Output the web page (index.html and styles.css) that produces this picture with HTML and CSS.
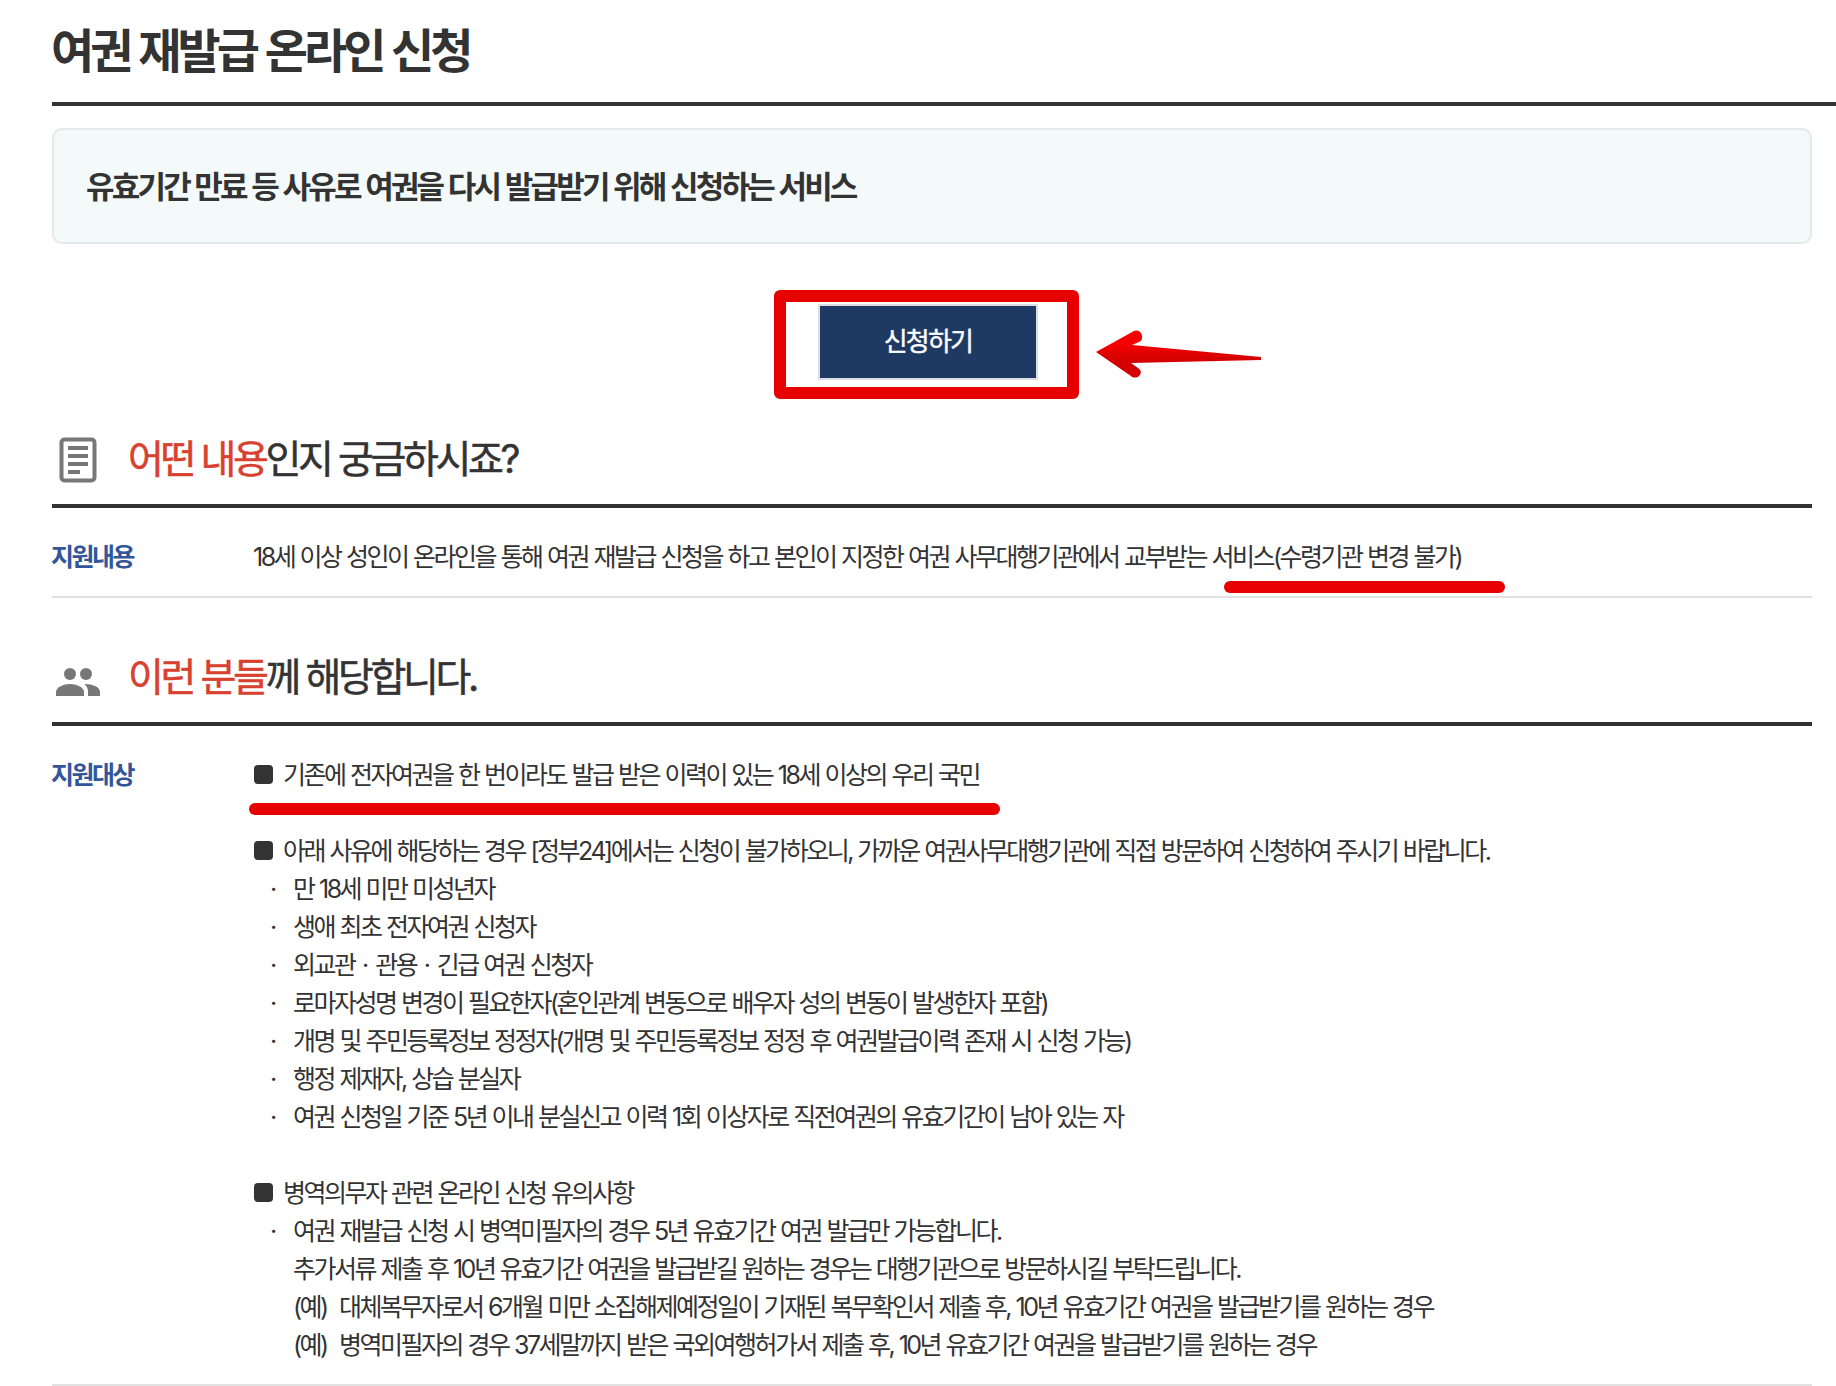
FILE: index.html
```html
<!DOCTYPE html>
<html lang="ko">
<head>
  <meta charset="UTF-8">
  <meta name="viewport" content="width=device-width, initial-scale=1.0">
  <title>여권 재발급 온라인 신청</title>
  <link rel="stylesheet" href="styles.css">
</head>
<body>
  <h1>여권 재발급 온라인 신청</h1>

  <div class="content">
    <div class="summary"><p>유효기간 만료 등 사유로 여권을 다시 발급받기 위해 신청하는 서비스</p></div>

    <div class="apply">
      <div class="apply-wrap">
        <button type="button" class="apply-btn">신청하기</button>
        <span class="mark-box"></span>
        <svg class="mark-arrow" width="170" height="50" viewBox="0 0 170 50">
          <defs>
            <linearGradient id="arrow" x1="0" y1="0" x2="0" y2="1">
              <stop offset="0.3" stop-color="#f50000"/>
              <stop offset="0.6" stop-color="#d40000"/>
            </linearGradient>
          </defs>
          <path d="M2 23 L40 2 C44 0 49 4 48 9 C48 11 47 12 45 13 L38 16 L167 28 L167 31 L37 34 L44 39 C47 41 48 44 45 47 C43 49 39 49 37 47 Z" fill="url(#arrow)"/>
        </svg>
      </div>
    </div>

    <div class="section">
      <h2>
        <svg class="icon" width="52" height="52" viewBox="0 0 52 52">
          <rect x="9.500" y="6.500" width="33" height="41" rx="3" fill="none" stroke="#777" stroke-width="4"/>
          <path d="M16 15h20M16 23h20M16 31h20M16 39h12" stroke="#777" stroke-width="4"/>
        </svg>
        <span><em>어떤 내용</em>인지 궁금하시죠?</span>
      </h2>
      <dl>
        <dt>지원내용</dt>
        <dd>
          <p>18세 이상 성인이 온라인을 통해 여권 재발급 신청을 하고 본인이 지정한 여권 사무대행기관에서 교부받는 서비스(수령기관 변경 불가)</p>
          <span class="mark-line mark-office"></span>
        </dd>
      </dl>
    </div>

    <div class="section">
      <h2>
        <svg class="icon" width="52" height="52" viewBox="0 0 52 52">
          <g fill="#777">
            <circle cx="18" cy="23" r="6"/>
            <circle cx="34" cy="23" r="6"/>
            <path d="M4 45v-4c0-5 8-8 14-8s14 3 14 8v4z"/>
            <path d="M36 45v-4c0-3-1-5.500-3.500-7.900C39 32.800 48 35.500 48 41v4z"/>
          </g>
        </svg>
        <span><em>이런 분들</em>께 해당합니다.</span>
      </h2>
      <dl>
        <dt>지원대상</dt>
        <dd>
          <p class="square">기존에 전자여권을 한 번이라도 발급 받은 이력이 있는 18세 이상의 우리 국민</p>
          <span class="mark-line mark-target"></span>
          <p class="square gap">아래 사유에 해당하는 경우 [정부24]에서는 신청이 불가하오니, 가까운 여권사무대행기관에 직접 방문하여 신청하여 주시기 바랍니다.</p>
          <p class="dot">만 18세 미만 미성년자</p>
          <p class="dot">생애 최초 전자여권 신청자</p>
          <p class="dot">외교관 <span class="mid">·</span> 관용 <span class="mid">·</span> 긴급 여권 신청자</p>
          <p class="dot">로마자성명 변경이 필요한자(혼인관계 변동으로 배우자 성의 변동이 발생한자 포함)</p>
          <p class="dot">개명 및 주민등록정보 정정자(개명 및 주민등록정보 정정 후 여권발급이력 존재 시 신청 가능)</p>
          <p class="dot">행정 제재자, 상습 분실자</p>
          <p class="dot">여권 신청일 기준 5년 이내 분실신고 이력 1회 이상자로 직전여권의 유효기간이 남아 있는 자</p>
          <p class="square gap">병역의무자 관련 온라인 신청 유의사항</p>
          <p class="dot">여권 재발급 신청 시 병역미필자의 경우 5년 유효기간 여권 발급만 가능합니다.</p>
          <p class="indent">추가서류 제출 후 10년 유효기간 여권을 발급받길 원하는 경우는 대행기관으로 방문하시길 부탁드립니다.</p>
          <p class="indent example"><span>(예)</span>대체복무자로서 6개월 미만 소집해제예정일이 기재된 복무확인서 제출 후, 10년 유효기간 여권을 발급받기를 원하는 경우</p>
          <p class="indent example"><span>(예)</span>병역미필자의 경우 37세말까지 받은 국외여행허가서 제출 후, 10년 유효기간 여권을 발급받기를 원하는 경우</p>
        </dd>
      </dl>
    </div>
  </div>
</body>
</html>
```
FILE: styles.css
```css
*, *::before {
  box-sizing: border-box;
}
body {
  margin: 0;
  padding-left: 52px;
  background-color: #fff;
  color: #333;
  font-family: Inter, "Noto Sans CJK KR", sans-serif;
  font-size: 25px;
  line-height: 38px;
  letter-spacing: -2.5px;
  word-spacing: 0.95px;
  white-space: nowrap;
  overflow: hidden;
}
h1, h2, p, dl, dd {
  margin: 0;
}
h1 {
  height: 106px;
  border-bottom: 4px solid #333;
  font-size: 47px;
  line-height: 101px;
  letter-spacing: -4px;
  word-spacing: 1.6px;
  text-indent: -1px;
}
.content {
  width: 1760px;
}
.summary {
  height: 116px;
  margin-top: 22px;
  padding: 0 32px;
  border: 2px solid #e6e9ec;
  border-radius: 10px;
  background-color: #f4f9fa;
  font-size: 31px;
  font-weight: bold;
  line-height: 113px;
  letter-spacing: -2.8px;
}
.apply {
  display: flex;
  justify-content: center;
  margin: 60px 8px 34px 0;
}
.apply-wrap {
  position: relative;
}
.apply-btn {
  display: block;
  width: 220px;
  height: 76px;
  padding: 0;
  border: 2px solid #dcdde2;
  background-color: #1f3a62;
  color: #fff;
  font: inherit;
  font-size: 26px;
  letter-spacing: -1.8px;
  -webkit-text-stroke: 0.4px;
}
.mark-box {
  position: absolute;
  left: -44px;
  top: -14px;
  width: 305px;
  height: 109px;
  border: 12px solid #e60000;
  border-radius: 6px;
}
.mark-arrow {
  position: absolute;
  left: 276px;
  top: 25px;
}
.section {
  margin-bottom: 34px;
}
h2 {
  display: flex;
  align-items: center;
  gap: 24px;
  height: 94px;
  border-bottom: 4px solid #333;
  font-size: 39px;
  font-weight: 400;
  letter-spacing: -3.4px;
  word-spacing: 0;
  -webkit-text-stroke: 0.5px;
}
h2 em {
  color: #d8402f;
  font-style: normal;
}
.icon {
  flex: none;
}
dl {
  display: flex;
  padding: 30px 0 20px;
  border-bottom: 2px solid #e1e1e1;
}
dt {
  width: 201px;
  color: #33569b;
  font-weight: bold;
  text-indent: -1px;
}
dd {
  position: relative;
}
.square::before {
  content: "";
  display: inline-block;
  width: 19px;
  height: 19px;
  margin: 0 10px 0 1px;
  border-radius: 4px;
  background-color: #333;
  vertical-align: 0;
}
.gap {
  margin-top: 38px;
}
.dot::before {
  content: "·";
  display: inline-block;
  width: 40px;
  padding-left: 17px;
}
.mid {
  margin: 0 3px 0 2px;
}
.indent {
  padding-left: 40px;
}
.example {
  display: flex;
}
.example span {
  width: 46px;
}
.mark-line {
  position: absolute;
  height: 12px;
  border-radius: 6px;
  background-color: #e60000;
}
.mark-office {
  left: 971px;
  top: 43px;
  width: 281px;
}
.mark-target {
  left: -4px;
  top: 47px;
  width: 751px;
}
```
